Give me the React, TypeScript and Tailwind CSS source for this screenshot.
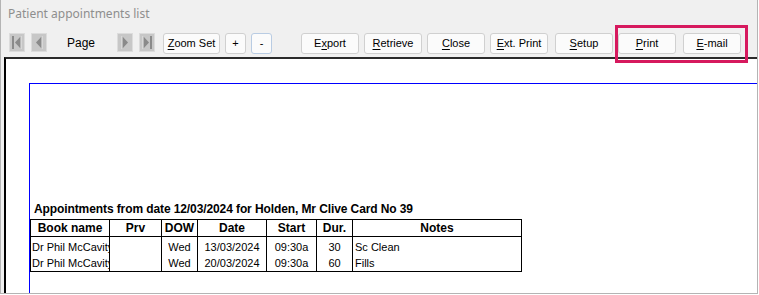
import React from "react";

const Btn = ({ label, u, ml, w = "w-[58px]" }: { label: string; u: number; ml: string; w?: string }) => (
  <div
    className={`${ml} ${w} h-[21px] flex items-center justify-center rounded-[3px] border border-[#d0d0d0] bg-[#fbfbfb] text-[11px] text-black font-['Liberation_Sans',Arial,sans-serif] leading-none`}
  >
    <span>
      {label.slice(0, u)}
      <span className="underline underline-offset-2">{label.slice(u, u + 1)}</span>
      {label.slice(u + 1)}
    </span>
  </div>
);

const Nav = ({ dir, bar, ml }: { dir: "l" | "r"; bar: boolean; ml: string }) => (
  <div className={`${ml} w-[16px] h-[19px] bg-[#c7c7c7] border border-[#dcdcdc] flex items-center justify-center`}>
    <svg width="14" height="17" viewBox="0 0 14 17">
      {dir === "l" ? (
        <>
          {bar && <rect x="2" y="2" width="2" height="13" fill="#8a8a8a" />}
          <polygon points={bar ? "11,2 5,8.5 11,15" : "10,2 4,8.5 10,15"} fill="#8a8a8a" />
          <line x1={bar ? 11 : 10} y1="2" x2={bar ? 11 : 10} y2="15" stroke="#e8e8e8" strokeWidth="1" />
        </>
      ) : (
        <>
          <polygon points={bar ? "3,2 9,8.5 3,15" : "4,2 10,8.5 4,15"} fill="#8a8a8a" />
          {bar && <rect x="10" y="2" width="2" height="13" fill="#8a8a8a" />}
          <line x1={bar ? 3 : 4} y1="2" x2={bar ? 3 : 4} y2="15" stroke="#e8e8e8" strokeWidth="1" />
        </>
      )}
    </svg>
  </div>
);

const cols = [
  { w: "w-[78px]", b: "" },
  { w: "w-[52px]", b: "border-l" },
  { w: "w-[36px]", b: "border-l" },
  { w: "w-[69px]", b: "border-l" },
  { w: "w-[50px]", b: "border-l" },
  { w: "w-[36px]", b: "border-l" },
  { w: "w-[169px]", b: "border-l" },
];

const headers = ["Book name", "Prv", "DOW", "Date", "Start", "Dur.", "Notes"];
const rows = [
  ["Dr Phil McCavity", "", "Wed", "13/03/2024", "09:30a", "30", "Sc Clean"],
  ["Dr Phil McCavity", "", "Wed", "20/03/2024", "09:30a", "60", "Fills"],
];
const align = ["text-left pl-[1px]", "text-center", "text-center", "text-center", "text-center", "text-center", "text-left pl-[2px]"];

export default function App() {
  return (
    <div className="relative w-[758px] h-[294px] bg-[#f0f0f0] border-l border-r border-b border-[#b4b4b4] flex flex-col overflow-hidden">
      <div className="h-[27px] pl-[7px] flex items-center text-[12px] text-[#8e8e8e] font-['Noto_Sans',sans-serif]">
        Patient appointments list
      </div>
      <div className="h-[30px] pt-[6px] flex items-start">
        <Nav dir="l" bar ml="ml-[8px]" />
        <Nav dir="l" bar={false} ml="ml-[6px]" />
        <div className="ml-[20px] w-[30px] h-[19px] flex items-center text-[12px] text-black font-['Liberation_Sans',Arial,sans-serif]">
          Page
        </div>
        <Nav dir="r" bar={false} ml="ml-[20px]" />
        <Nav dir="r" bar ml="ml-[6px]" />
        <Btn label="Zoom Set" u={0} ml="ml-[8px]" w="w-[57px]" />
        <Btn label="+" u={-1} ml="ml-[5px]" w="w-[21px]" />
        <div className="ml-[5px] w-[21px] h-[21px] flex items-center justify-center rounded-[3px] border border-[#b9cce3] bg-[#fbfbfb] text-[11px] text-black font-['Liberation_Sans',Arial,sans-serif]">
          -
        </div>
        <Btn label="Export" u={1} ml="ml-[29px]" />
        <Btn label="Retrieve" u={0} ml="ml-[5px]" />
        <Btn label="Close" u={0} ml="ml-[5px]" />
        <Btn label="Ext. Print" u={0} ml="ml-[5px]" />
        <Btn label="Setup" u={0} ml="ml-[7px]" />
        <Btn label="Print" u={0} ml="ml-[5px]" />
        <Btn label="E-mail" u={0} ml="ml-[7px]" />
      </div>
      <div className="flex-1 ml-[3px] bg-white border-t-2 border-l-2 border-t-[#2a2a2a] border-l-black pt-[24px] pl-[23px] flex">
        <div className="flex-1 flex bg-[#0000ff] pt-[1px] pl-[1px]">
          <div className="flex-1 bg-white pt-[118px] font-['Liberation_Sans',Arial,sans-serif] text-black">
            <div className="pl-[4px] text-[12px] font-bold leading-[14px] h-[14px] tracking-[-0.1px]">
              Appointments from date 12/03/2024 for Holden, Mr Clive Card No 39
            </div>
            <div className="mt-[3px] w-[492px] border border-black">
              <div className="flex h-[17px] border-b border-black">
                {headers.map((h, i) => (
                  <div
                    key={h}
                    className={`${cols[i].w} ${cols[i].b} border-black text-[12px] font-bold leading-[16px] text-center`}
                  >
                    {h}
                  </div>
                ))}
              </div>
              <div className="flex h-[2px]">
                {cols.map((c, i) => (
                  <div key={i} className={`${c.w} ${c.b} border-black`} />
                ))}
              </div>
              {rows.map((r, ri) => (
                <div key={ri} className="flex h-[16px]">
                  {r.map((v, i) => (
                    <div
                      key={i}
                      className={`${cols[i].w} ${cols[i].b} border-black text-[11px] leading-[16px] whitespace-nowrap overflow-hidden ${align[i]}`}
                    >
                      {v}
                    </div>
                  ))}
                </div>
              ))}
            </div>
          </div>
        </div>
      </div>
      <div className="absolute left-[614px] top-[25px] w-[133px] h-[38px] border-[3px] border-[#d6195e]" />
    </div>
  );
}
